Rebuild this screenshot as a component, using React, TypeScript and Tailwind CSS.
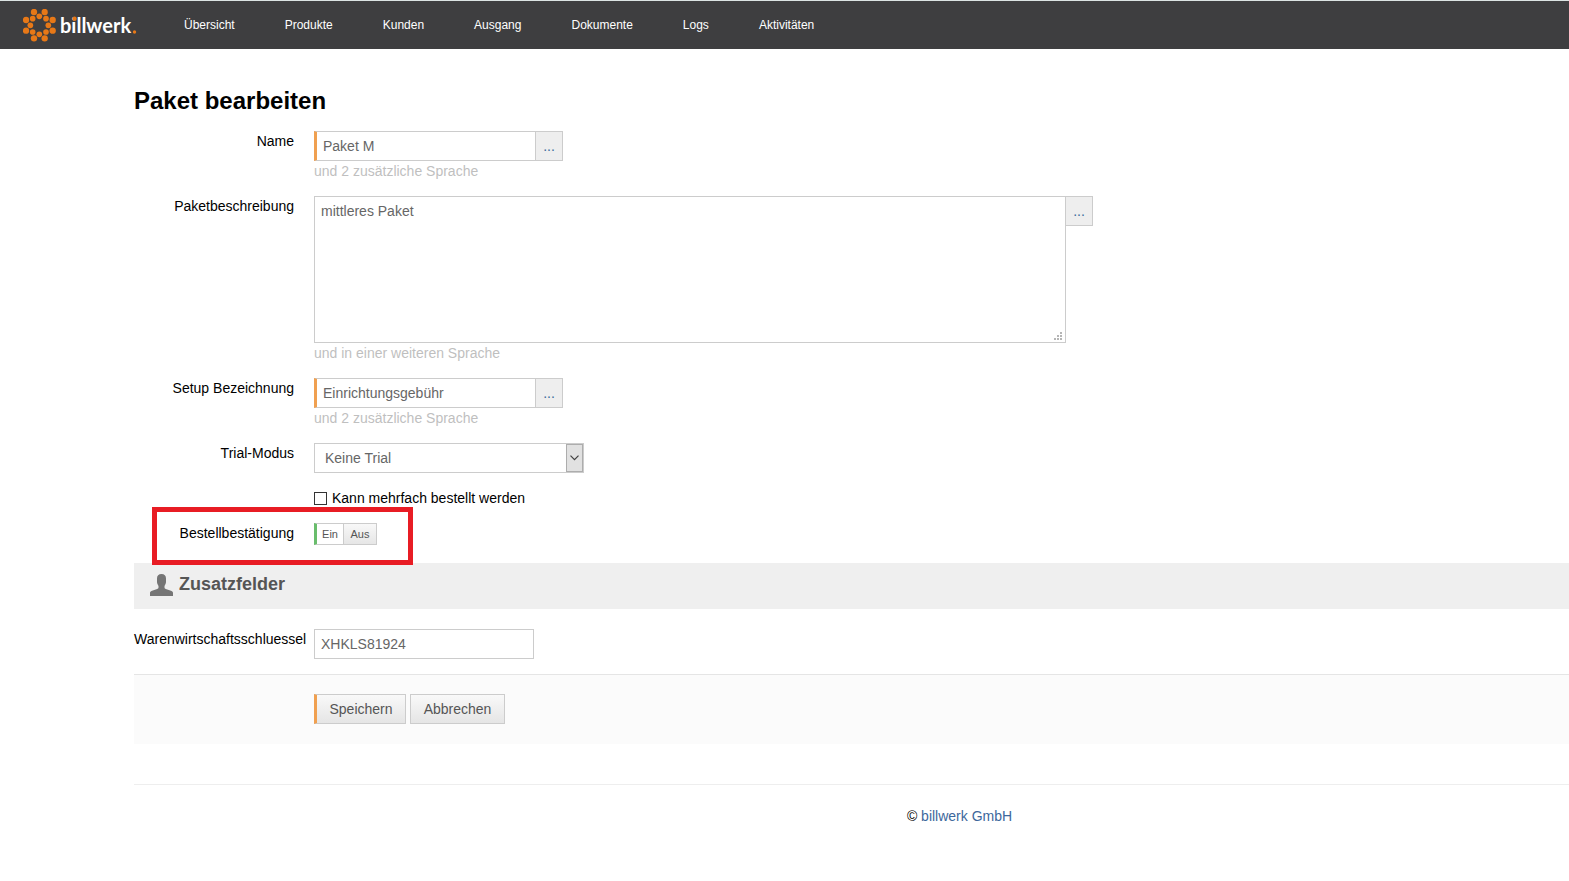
import { useState } from "react";
import type { ReactNode } from "react";

const navItems = ["Übersicht", "Produkte", "Kunden", "Ausgang", "Dokumente", "Logs", "Aktivitäten"];

const outerDots = [
  [33, 9], [65, 9], [89, 33], [89, 65], [65, 88], [33, 88], [9, 65], [9, 33],
];
const innerDots = [
  [49, 22], [69, 29], [76, 49], [69, 69], [49, 76], [29, 69], [22, 49], [29, 29],
];

function Logo() {
  return (
    <a href="#" aria-label="billwerk" className="flex items-center">
      <svg width="116" height="33" viewBox="0 0 116 33">
        <g transform="scale(0.3333)" fill="#e77817">
          {outerDots.map(([x, y]) => (
            <circle key={`o${x}-${y}`} cx={x} cy={y} r="9.5" />
          ))}
          {innerDots.map(([x, y]) => (
            <circle key={`i${x}-${y}`} cx={x} cy={y} r="8.5" />
          ))}
        </g>
        <text x="37" y="24" fill="#ffffff" fontFamily="Lato, sans-serif" fontSize="20" fontWeight="700">
          billwerk
        </text>
        <circle cx="51.500" cy="9.800" r="2.200" fill="#e77817" />
        <circle cx="111.500" cy="23" r="1.700" fill="#e77817" />
      </svg>
    </a>
  );
}

function Header() {
  return (
    <header className="flex h-[49px] items-center border-t border-[#dce4e3] bg-[#3e3e40] pl-[23px]">
      <Logo />
      <nav className="ml-5 flex">
        {navItems.map((item) => (
          <a key={item} href="#" className="px-[25px] text-[12px] leading-5 text-white">
            {item}
          </a>
        ))}
      </nav>
    </header>
  );
}

function Row({ label, htmlFor, help, children }: { label?: string; htmlFor?: string; help?: string; children: ReactNode }) {
  return (
    <div className="mb-[15px] flex items-start">
      <div className="mr-5 w-40 shrink-0 text-right whitespace-nowrap">
        {label && <label htmlFor={htmlFor}>{label}</label>}
      </div>
      <div>
        {children}
        {help && <p className="text-[#bfbfbf]">{help}</p>}
      </div>
    </div>
  );
}

function MoreButton() {
  return (
    <button type="button" className="h-[30px] w-7 border border-[#cccccc] bg-[#eeeeee] text-[#3b6a9c]">
      ...
    </button>
  );
}

function TextField({ id, value }: { id: string; value: string }) {
  return (
    <div className="flex">
      <input
        id={id}
        defaultValue={value}
        className="h-[30px] w-[221px] border border-r-0 border-l-3 border-[#cccccc] border-l-[#f0a050] bg-white px-1.5 text-[#666666] outline-none"
      />
      <MoreButton />
    </div>
  );
}

function ResizeGrip() {
  return (
    <svg width="8" height="8" className="pointer-events-none absolute right-1 bottom-[3px]" fill="#b5b5b5">
      <path d="M6 0h2v2H6zM3 3h2v2H3zM6 3h2v2H6zM0 6h2v2H0zM3 6h2v2H3zM6 6h2v2H6z" />
    </svg>
  );
}

function UserIcon() {
  return (
    <svg width="23" height="22" viewBox="0 0 23 22" fill="#757575" className="mb-0.5">
      <path d="M7 4.500C7 1.500 8.600 0 11.500 0S16 1.500 16 4.500v3.500c0 1.500-.8 2.800-1.500 4v1.500c0 1 .8 1.300 2 1.700l4.500 1.600c1.500.6 2 1.200 2 2.200v3H0v-3c0-1 .5-1.600 2-2.200l4.500-1.600c1.200-.4 2-.7 2-1.700V12C7.800 10.800 7 9.500 7 8z" />
    </svg>
  );
}

export default function App() {
  const [confirmation, setConfirmation] = useState(true);

  return (
    <div className="min-h-screen overflow-x-hidden bg-white font-['Liberation_Sans',Arial,sans-serif] text-[14px] leading-5 text-black">
      <Header />

      <main className="pt-8 pl-[134px]">
        <form onSubmit={(e) => e.preventDefault()}>
          <h1 className="mb-[10px] text-[24px] leading-10 font-bold">Paket bearbeiten</h1>

          <Row label="Name" htmlFor="name" help="und 2 zusätzliche Sprache">
            <TextField id="name" value="Paket M" />
          </Row>

          <Row label="Paketbeschreibung" htmlFor="description" help="und in einer weiteren Sprache">
            <div className="flex items-start">
              <div className="relative">
                <textarea
                  id="description"
                  defaultValue="mittleres Paket"
                  className="block h-[147px] w-[752px] resize-none border border-[#cccccc] bg-white px-1.5 py-1 text-[#666666] outline-none"
                />
                <ResizeGrip />
              </div>
              <div className="-ml-px">
                <MoreButton />
              </div>
            </div>
          </Row>

          <Row label="Setup Bezeichnung" htmlFor="setup" help="und 2 zusätzliche Sprache">
            <TextField id="setup" value="Einrichtungsgebühr" />
          </Row>

          <Row label="Trial-Modus" htmlFor="trial">
            <div className="relative">
              <select
                id="trial"
                className="block h-[30px] w-[270px] appearance-none border border-[#cccccc] bg-white px-[10px] text-[#666666] outline-none"
              >
                <option>Keine Trial</option>
              </select>
              <span className="pointer-events-none absolute top-px right-px flex h-7 w-[17px] items-center justify-center border border-[#adadad] bg-[#e1e1e1]">
                <svg width="9" height="6" viewBox="0 0 9 6" fill="none" stroke="#404040" strokeWidth="1.2">
                  <path d="M.5.7l4 4 4-4" />
                </svg>
              </span>
            </div>
          </Row>

          <Row>
            <label className="flex items-center gap-[5px]">
              <input type="checkbox" className="size-[13px] appearance-none border border-[#333333] bg-white checked:bg-[#333333]" />
              Kann mehrfach bestellt werden
            </label>
          </Row>

          <div className="relative">
            <Row label="Bestellbestätigung" htmlFor="confirm-on">
              <div className="mb-[3px] flex text-[11px] text-[#555555]">
                <button
                  id="confirm-on"
                  type="button"
                  aria-pressed={confirmation}
                  onClick={() => setConfirmation(true)}
                  className="h-[22px] w-[29px] border border-r-0 border-l-3 border-[#cccccc] border-l-[#69bd6c] bg-white"
                >
                  Ein
                </button>
                <button
                  type="button"
                  aria-pressed={!confirmation}
                  onClick={() => setConfirmation(false)}
                  className="h-[22px] w-[34px] border border-[#cccccc] bg-linear-to-b from-[#f8f8f8] to-[#e6e6e6]"
                >
                  Aus
                </button>
              </div>
            </Row>
            {/* highlight frame around the confirmation switch */}
            <div className="pointer-events-none absolute -top-4 left-[18px] z-10 h-[58px] w-[261px] border-5 border-[#e81c24]" />
          </div>

          <section>
            <h2 className="mb-5 flex h-[46px] items-center gap-1.5 bg-[#efefef] px-4 text-[18px] font-bold text-[#555555]">
              <UserIcon />
              <span className="mb-1">Zusatzfelder</span>
            </h2>
            <Row label="Warenwirtschaftsschluessel" htmlFor="erp-key">
              <input
                id="erp-key"
                defaultValue="XHKLS81924"
                className="block h-[30px] w-[220px] border border-[#cccccc] bg-white px-1.5 text-[#666666] outline-none"
              />
            </Row>
          </section>

          <div className="flex h-[70px] gap-1 border-t border-[#e5e5e5] bg-[#fbfbfb] pt-[19px] pl-[180px] text-[#555555]">
            <button
              type="submit"
              className="h-[30px] w-[92px] border border-l-3 border-[#cccccc] border-l-[#f0a050] bg-linear-to-b from-[#f9f9f9] to-[#e5e5e5]"
            >
              Speichern
            </button>
            <button type="button" className="h-[30px] w-[95px] border border-[#cccccc] bg-linear-to-b from-[#f9f9f9] to-[#e5e5e5]">
              Abbrechen
            </button>
          </div>
        </form>

        <footer className="mt-10 border-t border-[#eeeeee] pt-[21px] pl-[216px] text-center">
          © <a href="#" className="text-[#3d679c]">billwerk GmbH</a>
        </footer>
      </main>
    </div>
  );
}
